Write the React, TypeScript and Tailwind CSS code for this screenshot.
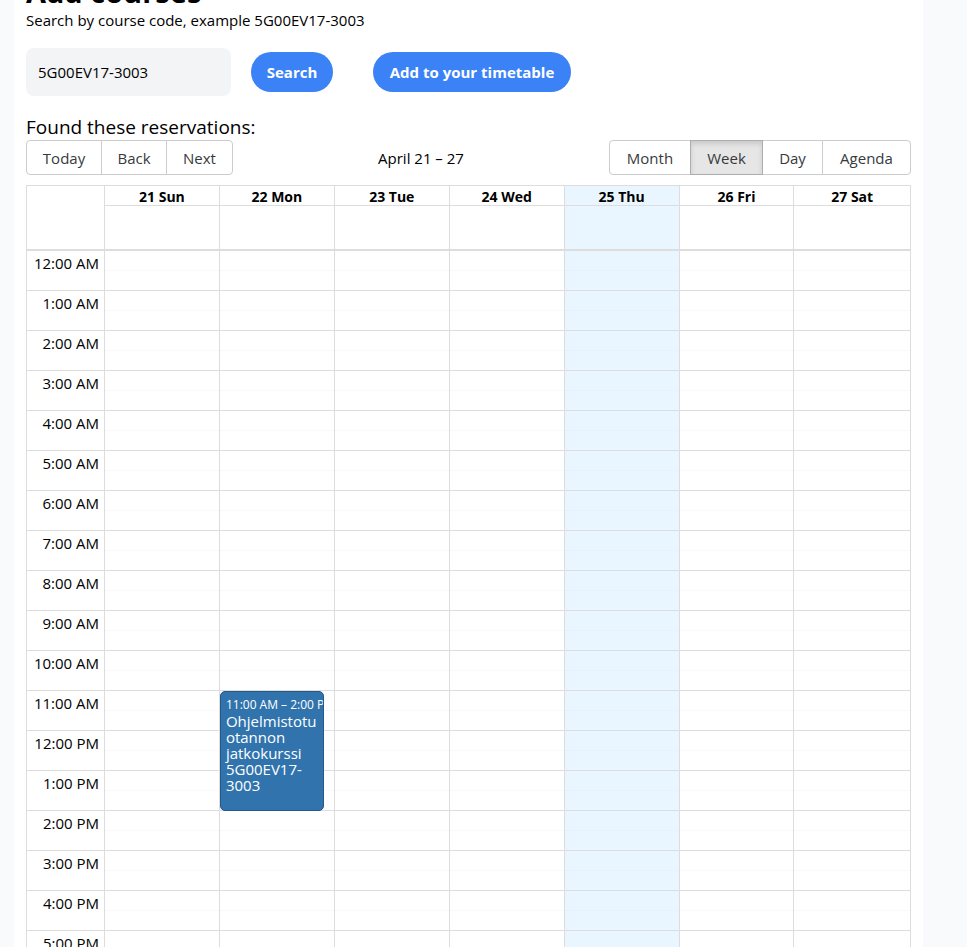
import { useState } from "react";

const days = ["21 Sun", "22 Mon", "23 Tue", "24 Wed", "25 Thu", "26 Fri", "27 Sat"];
const today = 4;

const hours = Array.from({ length: 24 }, (_, h) => {
  const hour = h % 12 === 0 ? 12 : h % 12;
  return `${hour}:00 ${h < 12 ? "AM" : "PM"}`;
});

const reservation = {
  day: 1,
  hour: 11,
  time: "11:00 AM – 2:00 PM",
  course: "Ohjelmistotuotannon",
  part: "jatkokurssi",
  code: "5G00EV17-3003",
};

const navigation = [
  { label: "Today", width: "w-[76px]" },
  { label: "Back", width: "w-[66px]" },
  { label: "Next", width: "w-[67px]" },
];

const views = [
  { label: "Month", width: "w-[82px]" },
  { label: "Week", width: "w-[73px]" },
  { label: "Day", width: "w-[61px]" },
  { label: "Agenda", width: "w-[89px]" },
];

function ToolbarButton({
  label,
  width,
  active = false,
  onClick,
}: {
  label: string;
  width: string;
  active?: boolean;
  onClick?: () => void;
}) {
  return (
    <button
      type="button"
      onClick={onClick}
      className={`-ml-px h-[35px] border pt-0.5 text-center text-[#373a3c] first:ml-0 first:rounded-l last:rounded-r ${width} ${
        active
          ? "z-10 border-[#adadad] bg-[#e6e6e6] shadow-[inset_0_3px_5px_rgba(0,0,0,0.125)]"
          : "border-[#cccccc] bg-white"
      }`}
    >
      {label}
    </button>
  );
}

function Reservation() {
  return (
    <div className="absolute top-0 left-0 z-10 h-[120px] w-[104px] overflow-hidden rounded-[5px] border border-[#265985] bg-[#3174ad] px-[5px] py-1 text-left text-white">
      <div className="text-[12px] leading-[17px] whitespace-nowrap">{reservation.time}</div>
      <div className="text-[15px] leading-4">
        <div className="break-all">{reservation.course}</div>
        <div>{reservation.part}</div>
        <div>{reservation.code}</div>
      </div>
    </div>
  );
}

function WeekTable() {
  return (
    <table className="mt-[10px] w-full table-fixed border-separate border-spacing-0 border-t border-r border-[#dddddd]">
      <thead>
        <tr>
          <td rowSpan={2} className="w-[78px] border-b-2 border-l border-[#dddddd]" />
          {days.map((day, i) => (
            <th
              key={day}
              scope="col"
              className={`h-5 w-[13%] border-b border-l border-[#dddddd] p-0 pt-[3px] text-[14px] leading-4 font-bold last:w-auto ${
                i === today ? "bg-[#eaf6ff]" : ""
              }`}
            >
              {day}
            </th>
          ))}
        </tr>
        <tr>
          {days.map((day, i) => (
            <td
              key={day}
              className={`h-[45px] border-b-2 border-l border-[#dddddd] p-0 ${
                i === today ? "bg-[#eaf6ff]" : ""
              }`}
            />
          ))}
        </tr>
      </thead>
      <tbody>
        {hours.map((label, h) => (
          <tr key={label}>
            <th
              scope="row"
              className="h-10 border-b border-l border-[#dddddd] p-0 pr-[5px] text-right align-top leading-6 font-normal whitespace-nowrap"
            >
              {label}
            </th>
            {days.map((day, i) => (
              <td
                key={day}
                className={`relative h-10 border-b border-l border-[#dddddd] p-0 align-top ${
                  i === today ? "bg-[#eaf6ff]" : ""
                }`}
              >
                <div
                  className={`h-5 border-b ${i === today ? "border-[#e7f3fc]" : "border-[#f9f9f9]"}`}
                />
                {h === reservation.hour && i === reservation.day && <Reservation />}
              </td>
            ))}
          </tr>
        ))}
      </tbody>
    </table>
  );
}

export default function App() {
  const [code, setCode] = useState("5G00EV17-3003");
  const [view, setView] = useState("Week");

  return (
    <div className="h-screen overflow-hidden bg-[#f8fafc] pr-11 pl-[14px] font-['Open_Sans','Noto_Sans',sans-serif] text-[15px] text-black">
      <main className="flow-root bg-white px-3">
        <h1 className="-mt-6 text-[29px] leading-8 font-bold">Add courses</h1>
        <label htmlFor="course-code" className="block leading-6">
          Search by course code, example 5G00EV17-3003
        </label>
        <form className="mt-4 flex items-center" onSubmit={(e) => e.preventDefault()}>
          <input
            id="course-code"
            type="text"
            value={code}
            onChange={(e) => setCode(e.target.value)}
            className="h-12 w-[205px] rounded-lg bg-[#f3f4f6] px-3 outline-none"
          />
          <button
            type="submit"
            className="ml-5 h-10 w-[82px] rounded-full bg-[#3b82f6] font-bold text-white"
          >
            Search
          </button>
          <button
            type="button"
            className="ml-10 h-10 w-[198px] rounded-full bg-[#3b82f6] font-bold whitespace-nowrap text-white"
          >
            Add to your timetable
          </button>
        </form>
        <h2 className="mt-[18px] text-[19px] leading-[26px]">Found these reservations:</h2>
        <div className="flex items-center">
          <div className="flex">
            {navigation.map((item) => (
              <ToolbarButton key={item.label} {...item} />
            ))}
          </div>
          <span className="grow pt-0.5 text-center">April 21 – 27</span>
          <div className="flex">
            {views.map((item) => (
              <ToolbarButton
                key={item.label}
                {...item}
                active={item.label === view}
                onClick={() => setView(item.label)}
              />
            ))}
          </div>
        </div>
        <WeekTable />
      </main>
    </div>
  );
}
